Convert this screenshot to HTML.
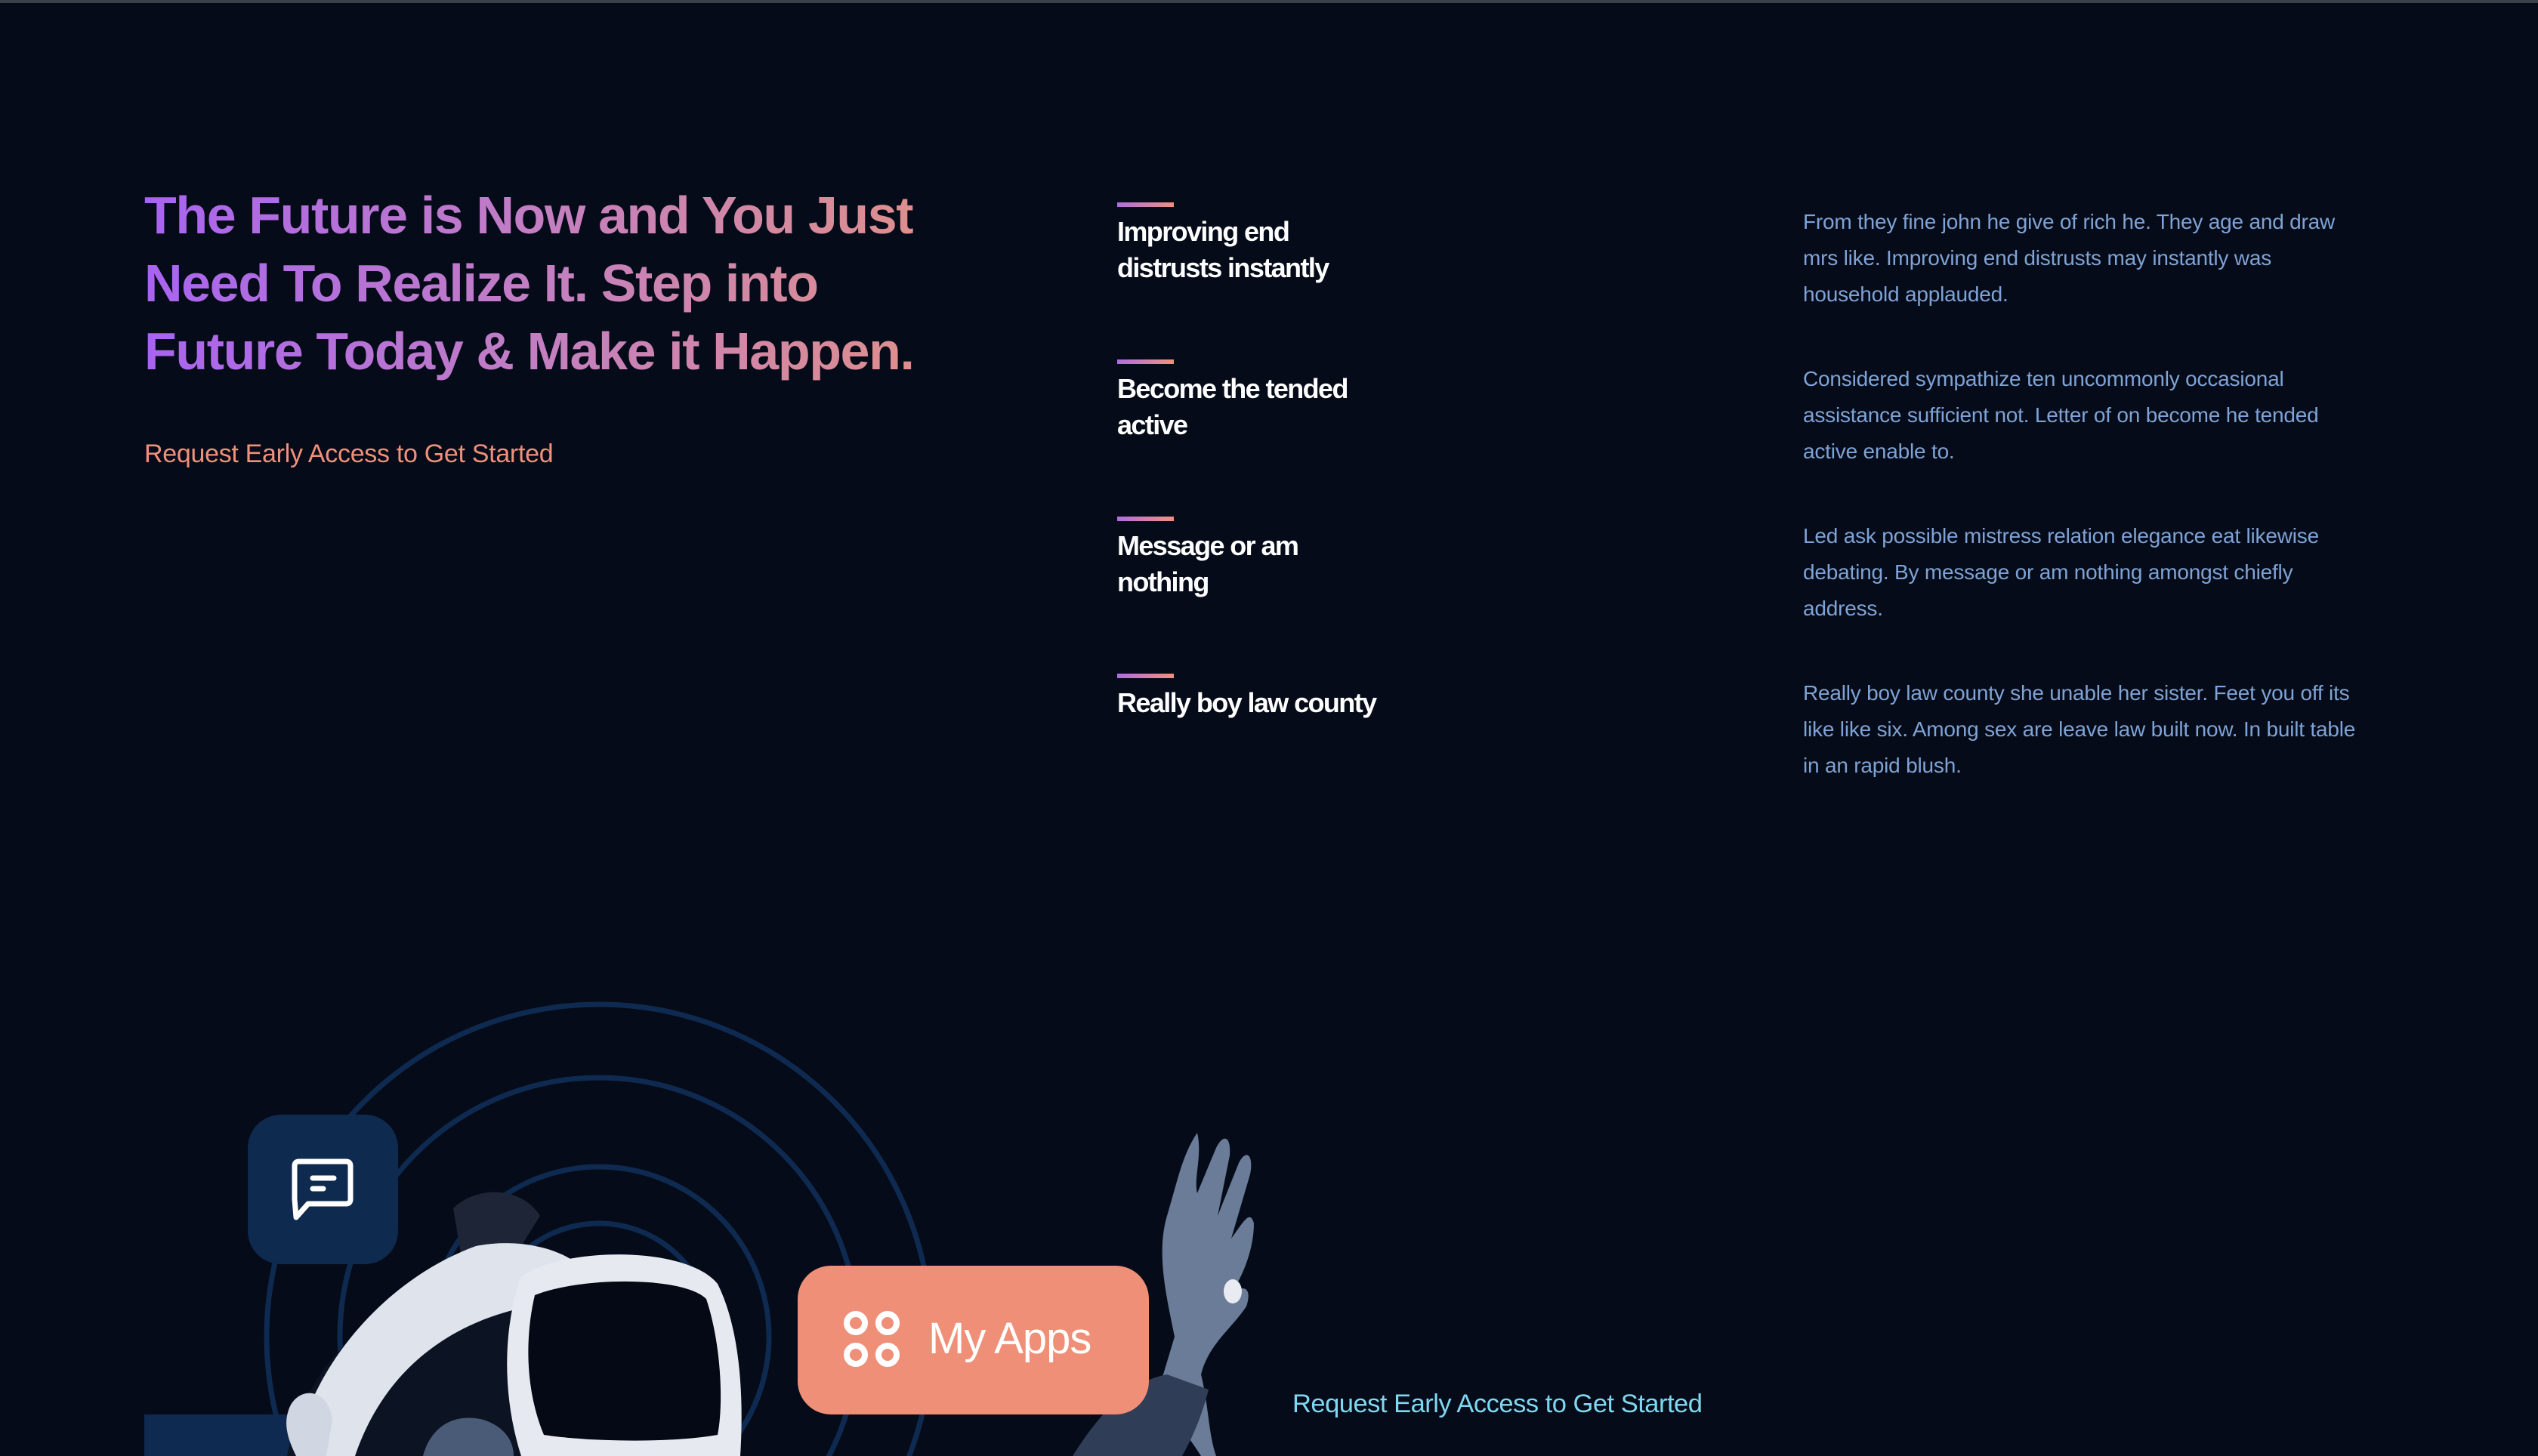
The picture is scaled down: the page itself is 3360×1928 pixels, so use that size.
<!DOCTYPE html>
<html style="overflow:hidden"><head><meta charset="utf-8"><style>
*{margin:0;padding:0;box-sizing:border-box}
html,body{width:3360px;height:1928px;overflow:hidden}
body{background:#050b18;position:relative;font-family:"Liberation Sans",sans-serif}
.topline{position:absolute;left:0;top:0;width:3360px;height:4px;background:#3a4048}
.h1{position:absolute;left:191px;top:240px;font-size:70px;font-weight:bold;line-height:90px;letter-spacing:-1.4px;
background:linear-gradient(90deg,#a864f0 0%,#c47fc0 45%,#e7957a 100%);-webkit-background-clip:text;background-clip:text;color:transparent;width:1200px}
.req1{position:absolute;left:191px;top:582px;font-size:34px;color:#f0907a;letter-spacing:-0.3px}
.bar{position:absolute;left:1479px;width:75px;height:6px;background:linear-gradient(90deg,#b06ee0,#f09080)}
.t{position:absolute;left:1479px;font-size:36px;font-weight:bold;color:#fff;line-height:48px;letter-spacing:-1.6px}
.p{position:absolute;left:2387px;font-size:28px;color:#7fa3d6;line-height:48px;letter-spacing:-0.2px;white-space:nowrap}
.req2{position:absolute;left:1711px;top:1840px;font-size:34.5px;color:#7fd8f2;letter-spacing:-0.5px}
</style></head><body>
<div class="topline"></div>
<div class="h1">The Future is Now and You Just<br>Need To Realize It. Step into<br>Future Today &amp; Make it Happen.</div>
<div class="req1">Request Early Access to Get Started</div>

<div class="bar" style="top:268px"></div>
<div class="t" style="top:283px">Improving end<br>distrusts instantly</div>
<div class="bar" style="top:476px"></div>
<div class="t" style="top:491px">Become the tended<br>active</div>
<div class="bar" style="top:684px"></div>
<div class="t" style="top:699px">Message or am<br>nothing</div>
<div class="bar" style="top:892px"></div>
<div class="t" style="top:907px">Really boy law county</div>

<div class="p" style="top:270px">From they fine john he give of rich he. They age and draw<br>mrs like. Improving end distrusts may instantly was<br>household applauded.</div>
<div class="p" style="top:478px">Considered sympathize ten uncommonly occasional<br>assistance sufficient not. Letter of on become he tended<br>active enable to.</div>
<div class="p" style="top:686px">Led ask possible mistress relation elegance eat likewise<br>debating. By message or am nothing amongst chiefly<br>address.</div>
<div class="p" style="top:894px">Really boy law county she unable her sister. Feet you off its<br>like like six. Among sex are leave law built now. In built table<br>in an rapid blush.</div>

<svg style="position:absolute;left:0;top:1250px" width="1800" height="678" viewBox="0 1250 1800 678">
<g fill="none" stroke="#0f2a50" stroke-width="7">
<circle cx="793" cy="1770" r="440"/>
<circle cx="793" cy="1770" r="343"/>
<circle cx="793" cy="1770" r="225"/>
<circle cx="793" cy="1770" r="150"/>
</g>
<rect x="191" y="1873" width="200" height="55" fill="#0f2a50"/>
<path d="M380 1928 C400 1820 480 1730 600 1700 C700 1690 860 1760 880 1928 Z" fill="#0c1424"/>
<path d="M560 1928 C570 1890 600 1870 640 1880 C670 1890 680 1910 680 1928Z" fill="#4a5b78"/>
<path d="M600 1600 C630 1570 690 1570 715 1610 L690 1650 L610 1660Z" fill="#1e2536"/>
<path d="M400 1890 C430 1790 520 1690 630 1650 C680 1640 730 1650 760 1670 C760 1700 740 1720 700 1730 C600 1750 510 1810 470 1928 L410 1928 Z" fill="#dfe4ec"/>
<path d="M385 1860 C400 1835 435 1840 440 1880 L432 1928 L392 1928 C378 1900 375 1880 385 1860Z" fill="#d0d7e2"/>
<path d="M690 1690 C750 1650 910 1650 950 1700 C980 1760 985 1850 980 1928 L690 1928 C665 1850 665 1760 690 1690Z" fill="#e6eaf0"/>
<path d="M708 1715 C770 1690 905 1690 935 1720 C955 1780 958 1860 950 1900 C880 1912 770 1908 720 1900 C695 1840 695 1770 708 1715Z" fill="#050915"/>
<path d="M1590 1928 C1560 1880 1530 1860 1540 1820 L1555 1770 C1545 1720 1530 1660 1545 1610 C1560 1560 1565 1530 1585 1500 C1592 1530 1580 1560 1585 1580 L1610 1520 C1620 1500 1630 1505 1628 1530 L1612 1610 L1640 1540 C1650 1520 1660 1530 1655 1555 L1630 1640 C1645 1620 1655 1600 1660 1620 C1660 1660 1640 1700 1625 1720 C1640 1700 1660 1700 1650 1730 C1630 1760 1600 1780 1590 1820 C1600 1860 1600 1900 1610 1928Z" fill="#6a7c98"/>
<path d="M1420 1928 C1450 1880 1490 1830 1545 1820 L1600 1840 C1590 1880 1575 1910 1565 1928Z" fill="#2f3d57"/>
<ellipse cx="1632" cy="1710" rx="12" ry="16" fill="#e8ecf2"/>
</svg>

<div style="position:absolute;left:328px;top:1476px;width:199px;height:198px;background:#0f2a4f;border-radius:44px"></div>
<svg style="position:absolute;left:380px;top:1530px" width="100" height="100" viewBox="0 0 100 100" fill="none" stroke="#fff" stroke-width="7" stroke-linejoin="round" stroke-linecap="round">
<path d="M10 14 Q10 8 16 8 L78 8 Q84 8 84 14 L84 58 Q84 64 78 64 L28 64 L12 82 L10 58 Z"/>
<path d="M34 30 L62 30 M34 44 L48 44"/>
</svg>

<div style="position:absolute;left:1056px;top:1676px;width:465px;height:197px;background:#ef8f78;border-radius:44px"></div>
<svg style="position:absolute;left:1116px;top:1735px" width="76" height="76" viewBox="0 0 76 76" fill="none" stroke="#fff" stroke-width="8">
<rect x="5" y="5" width="24" height="24" rx="12"/><rect x="47" y="5" width="24" height="24" rx="12"/>
<rect x="5" y="47" width="24" height="24" rx="12"/><rect x="47" y="47" width="24" height="24" rx="12"/>
</svg>
<div style="position:absolute;left:1229px;top:1738px;font-size:58px;color:#fff;letter-spacing:-1px;line-height:70px">My Apps</div>

<div class="req2">Request Early Access to Get Started</div>
</body></html>
